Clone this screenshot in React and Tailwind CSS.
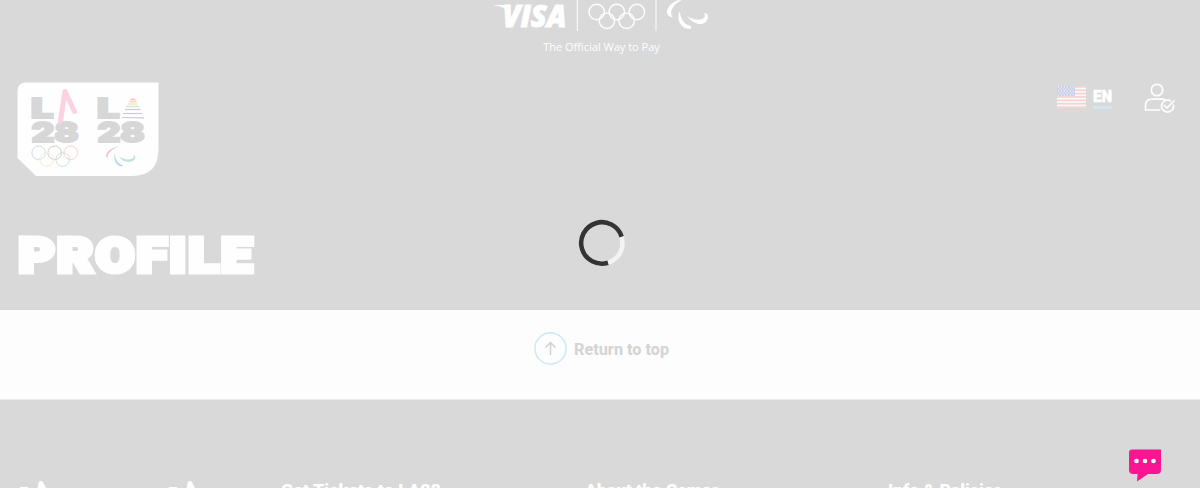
import React from 'react';

const footerColumns = [
  { title: 'Get Tickets to LA28', width: 160 },
  { title: 'About the Games', width: 135 },
  { title: 'Info & Policies', width: 114 },
];

const PartnerLogos = () => (
  <svg width="216" height="32" viewBox="494 0 216 32" fill="none" stroke="#fefefe">
    <path d="M494.5 5H504Q507 5 507.600 8L508.500 13Q505 6.500 494.500 5.600Z" fill="#fefefe" stroke="none" />
    <text
      x="502.500"
      y="26.700"
      textLength="64"
      lengthAdjust="spacingAndGlyphs"
      fill="#fefefe"
      strokeWidth="0.900"
      className="font-['Open_Sans',sans-serif] text-[29.5px] font-extrabold italic"
    >
      VISA
    </text>
    <path d="M577.3 0V31M656 0V31" strokeWidth="1" />
    <g strokeWidth="1.4">
      <circle cx="596.700" cy="12" r="7.700" />
      <circle cx="616.800" cy="12" r="7.700" />
      <circle cx="636.900" cy="12" r="7.700" />
      <circle cx="606.900" cy="20.800" r="7.700" />
      <circle cx="626.600" cy="20.800" r="7.700" />
    </g>
    <g fill="#fefefe" stroke="none">
      <path d="M684 -1C675 0 668 5 667 11Q666.500 16 673 17.500C668 12 674 3 684 -1Z" />
      <path d="M680 11C676 18 680 29 690 29Q692 28 691 26C684 25 680 18 680 11Z" />
      <path d="M687 16C694 26 707 27 708 17Q708 13 704 13C708 19 698 23 687 16Z" />
    </g>
  </svg>
);

const GamesLogo = () => (
  <svg width="142" height="94" viewBox="17 82 142 94" fill="none">
    <path d="M26 82.500H158.500V149Q158.500 176 132 176H36L17.500 158V91Q17.500 82.500 26 82.500Z" fill="#fefefe" />
    <g fill="#d7d7d7" stroke="#d7d7d7" strokeWidth="2" className="font-['Inter',sans-serif] text-[27.5px] font-black">
      <text x="31" y="118" textLength="22.500" lengthAdjust="spacingAndGlyphs">L</text>
      <text x="31.500" y="142" textLength="47" lengthAdjust="spacingAndGlyphs">28</text>
      <text x="97" y="118" textLength="22.500" lengthAdjust="spacingAndGlyphs">L</text>
      <text x="97.500" y="142" textLength="47" lengthAdjust="spacingAndGlyphs">28</text>
    </g>
    <path d="M60.500 121L65 91.500L74.500 111.500" stroke="#fdd0e2" strokeWidth="5" strokeLinecap="round" strokeLinejoin="round" />
    <path d="M130 100Q133 96 136 100Z" fill="#f8c9c9" />
    <path d="M129.500 101.500H136.500" stroke="#f8dac4" strokeWidth="2" />
    <path d="M127.500 104H138" stroke="#f5f1c5" strokeWidth="2" />
    <path d="M126 106.500H139.500" stroke="#d0eada" strokeWidth="1.5" />
    <path d="M125 109.500H140.500" stroke="#cccccf" strokeWidth="1.200" />
    <path d="M123 113.500H142" stroke="#cfc9da" strokeWidth="1.200" />
    <path d="M122 117.500L144 117.900" stroke="#cdcdcd" strokeWidth="1.200" />
    <g strokeWidth="1">
      <circle cx="38.700" cy="152.800" r="6.800" stroke="#ccdfec" />
      <circle cx="54.700" cy="152.800" r="6.800" stroke="#cfcfcf" />
      <circle cx="70.700" cy="152.800" r="6.800" stroke="#f6d3d6" />
      <circle cx="46.700" cy="159.500" r="6.800" stroke="#faecd0" />
      <circle cx="62.700" cy="159.500" r="6.800" stroke="#cde8d9" />
    </g>
    <path d="M119 146.500C109 148 103 155 108 158.500C106 155 111 149 119 146.500Z" fill="#f4bfc5" />
    <path d="M115 153C113 160 116 166 122 166.500L123 165C117 164 115 158 115 153Z" fill="#bdd7ec" />
    <path d="M119 157C124 164 135 163 135.500 157Q135 155 133 155.200C136 158 129 162 119 157Z" fill="#c0e6d4" />
  </svg>
);

const Flag = () => (
  <svg width="29" height="22" viewBox="0 0 29 22">
    <rect width="29" height="22" fill="#faf7f6" />
    {[0, 1, 2, 3, 4, 5, 6].map((row) => (
      <rect key={row} y={row * 3.385} width="29" height="1.690" fill="#f5d3d3" />
    ))}
    <rect width="18" height="10.200" fill="#cdd0e9" />
    {[0, 1, 2, 3, 4].map((row) => (
      <path key={row} d={`M${row % 2 ? 2.500 : 1} ${1 + row * 2}H17.500`} stroke="#fff" strokeWidth="0.900" strokeDasharray="1 2" />
    ))}
  </svg>
);

const ProfileIcon = () => (
  <svg width="31" height="30" viewBox="1144 83 31 30" fill="none" stroke="#fefefe" strokeWidth="1.700" strokeLinecap="round" strokeLinejoin="round">
    <circle cx="1157" cy="90" r="5.700" />
    <path d="M1159.500 110H1145.500V106Q1145.500 99.200 1152 99.200H1162Q1163.500 99.200 1165 99.800" />
    <path d="M1170.500 100.800A6 6 0 1 0 1173.500 105" />
    <path d="M1164.500 105.500L1167 108L1174 101" />
  </svg>
);

const FooterMark = () => (
  <svg width="62" height="70" viewBox="0 0 62 70" fill="#fefefe">
    <text x="0" y="33" textLength="23" lengthAdjust="spacingAndGlyphs" className="font-['Inter',sans-serif] text-[37px] font-black">L</text>
    <path d="M17 34L23 2.500L34 25" fill="none" stroke="#fefefe" strokeWidth="5" strokeLinecap="round" strokeLinejoin="round" />
  </svg>
);

const Spinner = () => (
  <svg className="absolute left-[578px] top-[219px]" width="48" height="48" viewBox="578 219 48 48" fill="none" strokeWidth="4.600">
    <circle cx="601.800" cy="243" r="20.700" stroke="#f3f3f3" />
    <path d="M608 262.700A20.700 20.700 0 1 1 621.600 236.700" stroke="#343434" />
  </svg>
);

const App = () => {
  return (
    <div className="relative h-[488px] w-[1200px] overflow-hidden bg-[#d9d9d9] font-['Roboto',sans-serif] text-[#fefefe]">
      <header className="flex h-[310px] flex-col">
        <div className="flex h-[60px] flex-col items-center pl-[3px]">
          <PartnerLogos />
          <p className="mt-[7px] whitespace-nowrap font-['Open_Sans',sans-serif] text-[11px] leading-4">The Official Way to Pay</p>
        </div>
        <div className="flex justify-between pl-[17px] pr-[25px] pt-[22px]">
          <GamesLogo />
          <div className="flex items-start">
            <div className="mt-1">
              <Flag />
            </div>
            <div className="ml-[7px] mt-1 w-[19px] border-b-[3px] border-[#d0e8f3] pb-[1px]">
              <svg className="block overflow-visible" width="19" height="19" fill="#fefefe" stroke="#fefefe" strokeWidth="0.500">
                <text x="0" y="15.500" textLength="19" lengthAdjust="spacingAndGlyphs" className="text-[16px] font-black">EN</text>
              </svg>
            </div>
            <div className="ml-8 mt-[1px]">
              <ProfileIcon />
            </div>
          </div>
        </div>
        <h1 className="mt-[58px] pl-[18px]">
          <svg className="block overflow-visible" width="238" height="42" fill="#fefefe" stroke="#fefefe" strokeWidth="5" strokeLinejoin="miter">
            <text x="0.500" y="38" textLength="236" lengthAdjust="spacingAndGlyphs" className="text-[48px] font-black tracking-[2px]">PROFILE</text>
          </svg>
        </h1>
      </header>

      <section className="flex h-[90px] items-center border-b border-[#ececec] bg-[#fdfdfd] pb-3 pl-[534px]">
        <button type="button" className="flex items-center gap-[7px] text-[#d5d5d5]">
          <svg width="33" height="33" viewBox="0 0 33 33" fill="none">
            <circle cx="16.500" cy="16.500" r="15.600" stroke="#d0eaf5" strokeWidth="1.600" />
            <path d="M16.500 23V10.500M11.500 15.500L16.500 10.500L21.500 15.500" stroke="#d1d1d1" strokeWidth="1.500" />
          </svg>
          <svg className="block overflow-visible" width="95" height="20" fill="#d5d5d5">
            <text x="0" y="15.500" textLength="95" lengthAdjust="spacingAndGlyphs" className="text-[16px] font-extrabold">Return to top</text>
          </svg>
        </button>
      </section>

      <footer className="grid grid-cols-[263px_304px_303px_1fr] pl-[18px] pt-[81px]">
        <div className="flex gap-[87px]">
          <FooterMark />
          <FooterMark />
        </div>
        {footerColumns.map((column) => (
          <h2 key={column.title}>
            <svg className="block overflow-visible" width="180" height="30" fill="#fefefe">
              <text x="0" y="15" textLength={column.width} lengthAdjust="spacingAndGlyphs" className="text-[16px] font-black">{column.title}</text>
            </svg>
          </h2>
        ))}
      </footer>

      <Spinner />
      <button type="button" aria-label="Open chat" className="absolute left-[1129px] top-[449px]">
        <svg width="33" height="33" viewBox="0 0 33 33">
          <path d="M3 .5H32V21Q32 25 28 25H19L8 32.500L8.500 25H4Q0 25 0 21V3.500Q0 .5 3 .5Z" fill="#fc1593" />
          <g fill="#fff">
            <circle cx="7.500" cy="12" r="2.300" />
            <circle cx="16" cy="12" r="2.300" />
            <circle cx="24.500" cy="12" r="2.300" />
          </g>
        </svg>
      </button>
    </div>
  );
};

export default App;
